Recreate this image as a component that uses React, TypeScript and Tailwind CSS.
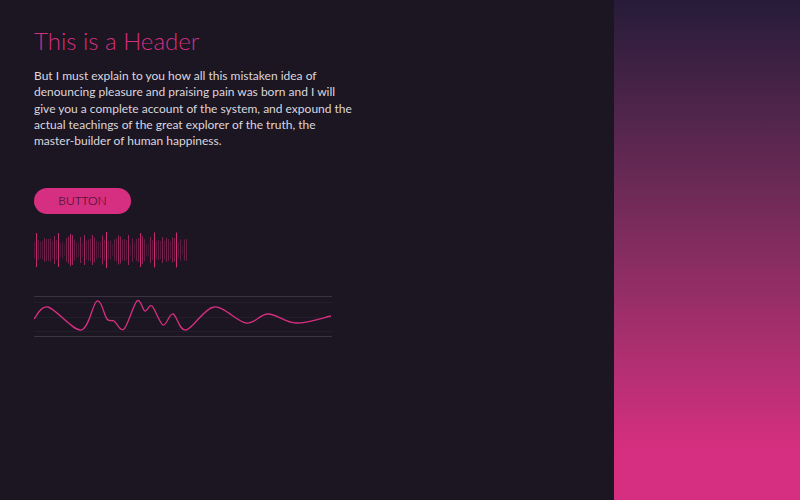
const bars = Array.from({ length: 77 }, (_, i) => {
  const a = Math.abs(Math.sin(i * 1.7) * Math.cos(i * 0.53));
  const b = Math.abs(Math.sin(i * 0.37 + 1));
  const h = 8 + Math.round((0.35 * b + 0.65 * a) * 29);
  return h;
});

const pts: [number, number][] = [
  [0, 23], [14, 11], [47, 34], [63, 5], [73, 23], [80, 25], [90, 33],
  [103, 5], [111, 15], [118, 10], [129, 29], [139, 18], [152, 34],
  [180, 11], [212, 27], [234, 18], [262, 27], [297, 20],
];

function smoothPath(p: [number, number][]) {
  let d = `M${p[0][0]},${p[0][1]}`;
  for (let i = 0; i < p.length - 1; i++) {
    const p0 = p[i - 1] || p[i];
    const p1 = p[i];
    const p2 = p[i + 1];
    const p3 = p[i + 2] || p2;
    const c1x = p1[0] + (p2[0] - p0[0]) / 6;
    const c1y = p1[1] + (p2[1] - p0[1]) / 6;
    const c2x = p2[0] - (p3[0] - p1[0]) / 6;
    const c2y = p2[1] - (p3[1] - p1[1]) / 6;
    d += ` C${c1x},${c1y} ${c2x},${c2y} ${p2[0]},${p2[1]}`;
  }
  return d;
}

function Bars() {
  return (
    <svg width="156" height="40" className="block">
      {bars.map((h, i) => {
        const t = (h - 8) / 29;
        return (
          <rect
            key={i}
            x={i * 2}
            y={20 - h / 2}
            width="1"
            height={h}
            fill="#e0307f"
            opacity={0.18 + 0.82 * t * t}
          />
        );
      })}
    </svg>
  );
}

function Wave() {
  return (
    <svg width="298" height="42" className="block">
      <line x1="0" y1="0.5" x2="298" y2="0.5" stroke="#3a3342" />
      <line x1="0" y1="6.5" x2="298" y2="6.5" stroke="#231e2b" />
      <line x1="0" y1="21.5" x2="298" y2="21.5" stroke="#231e2b" />
      <line x1="0" y1="35.5" x2="298" y2="35.5" stroke="#231e2b" />
      <line x1="0" y1="40.5" x2="298" y2="40.5" stroke="#3a3342" />
      <path d={smoothPath(pts)} fill="none" stroke="#d62e80" strokeWidth="1.3" />
    </svg>
  );
}

export default function App() {
  return (
    <div className="flex h-[500px] w-[800px] font-['Lato',sans-serif]">
      <div className="w-[614px] bg-[#1b1622] px-[34px] pt-[26px]">
        <h1 className="text-[24px] font-light leading-[30px] text-[#d62e80]">This is a Header</h1>
        <p className="mt-[12px] w-[322px] text-[12px] leading-[16.3px] text-[#dcd6de]">
          But I must explain to you how all this mistaken idea of denouncing pleasure and praising pain was born and I will give you a complete account of the system, and expound the actual teachings of the great explorer of the truth, the master-builder of human happiness.
        </p>
        <button className="mt-[39px] flex h-[26px] w-[97px] items-center justify-center rounded-full bg-[#d62e80] text-[12px] font-light text-[#1c0a19]">
          BUTTON
        </button>
        <div className="mt-[16px]">
          <Bars />
        </div>
        <div className="mt-[26px]">
          <Wave />
        </div>
      </div>
      <div className="flex-1 bg-gradient-to-b from-[#271b3a] to-[#d62e80] to-90%" />
    </div>
  );
}
